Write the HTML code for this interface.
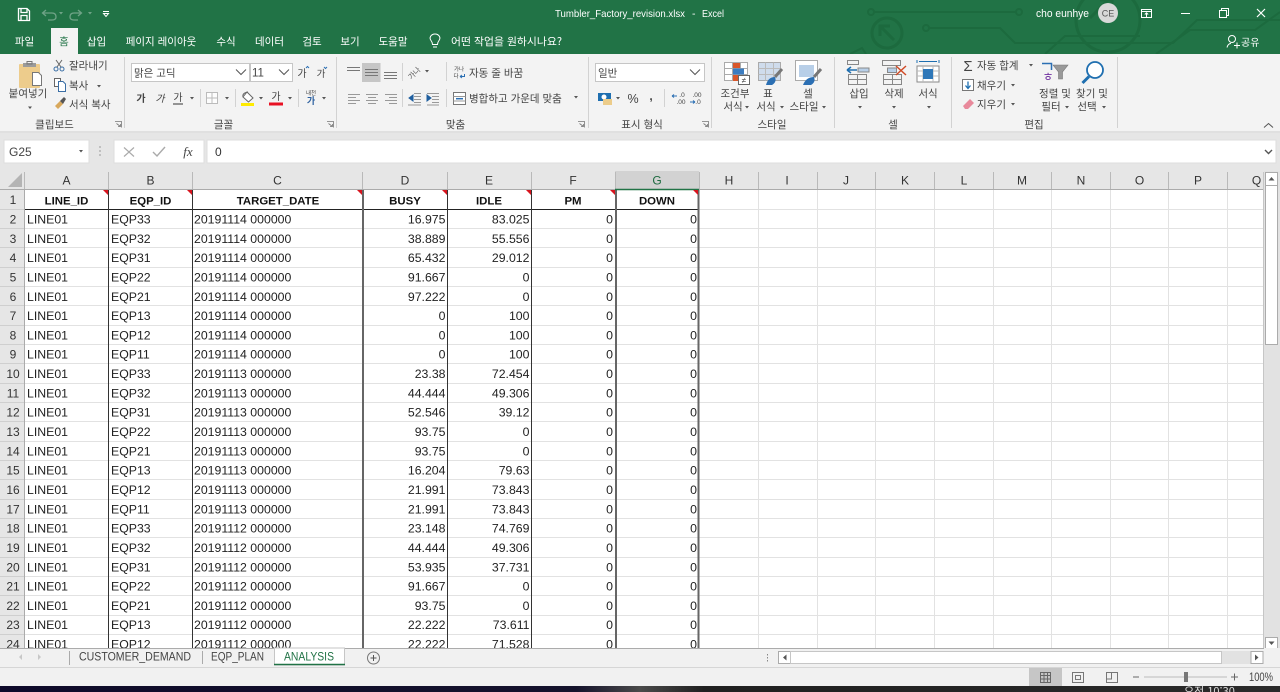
<!DOCTYPE html>
<html lang="ko"><head><meta charset="utf-8"><title>Tumbler_Factory_revision.xlsx - Excel</title>
<style>
html,body{margin:0;padding:0;width:1280px;height:692px;overflow:hidden;background:#e6e6e6}
svg{display:block;position:absolute;left:0;top:0}
text{font-family:"Liberation Sans","Noto Sans CJK KR",sans-serif;font-size:11px;fill:#333}
.k{font-family:"Noto Sans CJK KR","Liberation Sans",sans-serif;font-size:10.5px;fill:#444}
.w{font-family:"Noto Sans CJK KR","Liberation Sans",sans-serif;font-size:10.5px;fill:#fff}
.g text{font-size:12.3px;fill:#222}
.r{text-anchor:end}
.m{text-anchor:middle}
.h text{font-size:11.4px;font-weight:bold;fill:#111;text-anchor:middle}
.c text{font-size:12px;fill:#333;text-anchor:middle}
.n text{font-size:12px;fill:#333;text-anchor:middle}
</style></head><body>
<svg width="1280" height="692" viewBox="0 0 1280 692" xmlns="http://www.w3.org/2000/svg">
<!-- title bar -->
<rect width="1280" height="54" fill="#217346"/>
<g fill="none" stroke="#1c6a3e" stroke-width="2">
<circle cx="871" cy="12" r="3"/><path d="M874 12H1015"/><circle cx="1019" cy="12" r="3"/>
<circle cx="887" cy="33" r="15" stroke-width="3"/><path d="M894 40L881 27M880 36V26H890" stroke-width="3"/>
<circle cx="926" cy="28" r="3"/><path d="M929 28L1000 28L1015 43H1173L1197 20H1280"/>
<circle cx="1108" cy="20" r="32" stroke-width="3"/><path d="M1090 18L1108 0M1100 0H1112V8" stroke-width="3"/>
<path d="M850 54L862 48L866 54M1156 54L1190 30H1255L1280 12M1045 54L1065 36H1140"/>
</g>
<!-- QAT -->
<g fill="none" stroke="#fff" stroke-width="1.3">
<path d="M18.500 8.500H27L29.500 11V20.500H18.500Z"/><path d="M21 8.500V12.500H27V8.500M21 20.500V15.500H27V20.500"/>
<g stroke="#6fa387"><path d="M43 13H52Q56 13 56 17Q56 20 52 20H48M46 10L42.500 13L46 16"/><path d="M82 13H75Q71 13 71 17Q71 20 75 20H79M79 10L82.500 13L79 16" transform="translate(-1 0)"/></g>
</g>
<path d="M59 12h4l-2 2.500zM88 12h4l-2 2.500z" fill="#6fa387"/>
<path d="M103 11.500h6M103.500 13.500h5l-2.500 3z" stroke="#fff" fill="none"/>
<text x="555" y="17" textLength="130" lengthAdjust="spacingAndGlyphs" style="fill:#fff;font-size:10.500px">Tumbler_Factory_revision.xlsx</text>
<text x="692" y="17" style="fill:#fff;font-size:10.500px">-</text>
<text x="702" y="17" textLength="22" lengthAdjust="spacingAndGlyphs" style="fill:#fff;font-size:10.500px">Excel</text>
<text x="1036" y="17" textLength="53" lengthAdjust="spacingAndGlyphs" style="fill:#fff;font-size:11px">cho eunhye</text>
<circle cx="1108" cy="13" r="10" fill="#d9d9d9"/><text x="1108" y="16.500" class="m" style="font-size:9px;fill:#555">CE</text>
<g fill="none" stroke="#fff" stroke-width="1"><rect x="1141.500" y="9.500" width="10" height="8"/><path d="M1141.500 11.500H1151.500M1146.500 17V13M1144.800 14.500L1146.500 12.800L1148.200 14.500"/>
<path d="M1181 13.500H1190"/><rect x="1219.500" y="10.500" width="7" height="7"/><path d="M1221.500 10.500V8.500H1228.500V15.500H1226.500"/><path d="M1257 9L1265 17M1265 9L1257 17" stroke-width="1.200"/></g>
<!-- tabs -->
<rect x="51" y="28" width="27" height="27" fill="#f3f3f3"/>
<text x="24.500" y="45" class="w m">파일</text>
<text x="64" y="45" class="k m" style="fill:#217346">홈</text>
<text x="96.500" y="45" class="w m">삽입</text>
<text x="161" y="45" class="w m">페이지 레이아웃</text>
<text x="226" y="45" class="w m">수식</text>
<text x="269.500" y="45" class="w m">데이터</text>
<text x="312" y="45" class="w m">검토</text>
<text x="350" y="45" class="w m">보기</text>
<text x="393" y="45" class="w m">도움말</text>
<g fill="none" stroke="#fff" stroke-width="1"><path d="M432.500 44.500Q432.500 42.500 431 40.500Q429.500 38.500 430.500 36.500Q432 34 435 34Q438 34 439.500 36.500Q440.500 38.500 439 40.500Q437.500 42.500 437.500 44.500ZM433 47H437"/></g>
<text x="451" y="45" class="w" textLength="111" lengthAdjust="spacingAndGlyphs">어떤 작업을 원하시나요?</text>
<g fill="none" stroke="#fff" stroke-width="1"><circle cx="1232" cy="39" r="3.500"/><path d="M1227 47.500Q1228 43.500 1231 43.500M1234 45.500H1240M1237 42.500V48.500"/></g>
<text x="1241" y="46" class="w" style="font-size:10px">공유</text>
<!-- ribbon -->
<rect y="54" width="1280" height="77" fill="#f3f3f3"/>
<rect y="131" width="1280" height="40" fill="#e6e6e6"/>
<path d="M124.500 57V128M336.500 57V128M588.500 57V128M711.500 57V128M834.500 57V128M951.500 57V128M1117.500 57V128" stroke="#d2d2d2"/>
<!-- clipboard -->
<rect x="19" y="64" width="21" height="24" rx="1" fill="#edcc8c"/><path d="M23 63H36V67H23Z" fill="#9b9b9b"/><path d="M27 61.500H32V64H27Z" fill="none" stroke="#777"/>
<path d="M32.500 72.500H38.500L41.500 75.500V85.500H32.500Z" fill="#fff" stroke="#777"/>
<text x="28" y="97" class="k m">붙여넣기</text><path d="M28 106.500h4l-2 2.500z" fill="#555"/>
<g fill="none" stroke="#3a6ea5" stroke-width="1"><circle cx="56" cy="69" r="2"/><circle cx="62" cy="69" r="2"/></g><path d="M57 67L62 60M61 67L56 60" stroke="#666" fill="none"/>
<text x="69" y="69" class="k">잘라내기</text>
<path d="M54.500 78.500H60.500V86.500H54.500Z" fill="#fff" stroke="#666"/><path d="M58.500 81.500H63L65.500 84V91.500H58.500Z" fill="#fff" stroke="#3a6ea5"/>
<text x="69" y="89" class="k">복사</text><path d="M97 85h4l-2 2.500z" fill="#555"/>
<path d="M55 106L60 101L63 104L58 109Z" fill="#d8a85c"/><path d="M60 101L64 97L66 99L63 104Z" fill="#555"/>
<text x="69" y="108" class="k">서식 복사</text>
<text x="54.500" y="128" class="k m">클립보드</text>
<path d="M115 121.500H121.500V127.500M116.500 123.500L120.500 126.500M118 126.500H120.500V124" fill="none" stroke="#777" stroke-width=".8"/>
<!-- font -->
<rect x="131.500" y="63.500" width="118" height="18" fill="#fff" stroke="#c6c6c6"/><rect x="250.500" y="63.500" width="42" height="18" fill="#fff" stroke="#c6c6c6"/>
<text x="134" y="76.500" class="k">맑은 고딕</text><text x="252" y="76.500" style="font-size:11.500px;fill:#444">11</text>
<path d="M236 69.500L241 74.500L246 69.500M279 69.500L284 74.500L289 69.500" fill="none" stroke="#555"/>
<text x="302" y="77" class="k m" style="font-size:10px">가</text><path d="M306 68l1.500-1.500 1.500 1.500" stroke="#2b6fb3" fill="none"/>
<text x="321" y="77" class="k m" style="font-size:9.500px">가</text><path d="M324 67l1.500 1.500 1.500-1.500" stroke="#2b6fb3" fill="none"/>
<text x="141" y="102" class="k m" style="font-weight:bold;font-size:10px">가</text>
<text x="160" y="102" class="k m" style="font-style:italic;font-size:10px">가</text>
<text x="178" y="101" class="k m" style="font-size:10px">가</text><path d="M173 104H183" stroke="#333"/>
<path d="M190 97h4l-2 2.500zM225 97h4l-2 2.500zM259 97h4l-2 2.500zM288 97h4l-2 2.500zM322 97h4l-2 2.500z" fill="#555"/>
<path d="M200.500 89V107M235.500 89V107M298.500 89V107" stroke="#d2d2d2"/>
<path d="M206.500 92.500H217.500V103.500H206.500ZM212 92.500V103.500M206.500 98H217.500" fill="#fdfdfd" stroke="#bbb"/>
<path d="M243 97L247 92L253 98L248.500 102Z" fill="#fff" stroke="#666"/><path d="M243 97Q242 93 248 92" fill="none" stroke="#666"/><path d="M241 103H254V106H241Z" fill="#ffeb00"/>
<text x="276" y="100" class="k m" style="font-size:10px">가</text><path d="M269 102.500H283V105.500H269Z" fill="#e81123"/>
<text x="311" y="95" class="k m" style="font-size:5.500px">내천</text><text x="311" y="104" class="k m" style="font-size:9px;fill:#2b5f9e;font-weight:bold">가</text>
<text x="223.500" y="128" class="k m">글꼴</text>
<path d="M327 121.500H333.500V127.500M328.500 123.500L332.500 126.500M330 126.500H332.500V124" fill="none" stroke="#777" stroke-width=".8"/>
<!-- alignment -->
<rect x="362" y="63" width="18.500" height="19" fill="#c6c6c6"/>
<path d="M347 67.500H360M347 70.500H360" stroke="#777"/>
<path d="M365 69.500H378M365 72.500H378M365 75.500H378" stroke="#777"/>
<path d="M384 72.500H397M384 75.500H397M384 78.500H397" stroke="#777"/>
<path d="M402.500 63V81M402.500 89V107M446.500 62V81M446.500 89V107" stroke="#d2d2d2"/>
<text x="414" y="76" class="k m" style="font-size:7.500px;fill:#555" transform="rotate(-45 414 73)">가나</text><path d="M425 70h4l-2 2.500zM574 96h4l-2 2.500z" fill="#555"/>
<path d="M348 94.500H360M348 97.500H356M348 100.500H360M348 103.500H356" stroke="#999"/>
<path d="M366 94.500H378M368 97.500H376M366 100.500H378M368 103.500H376" stroke="#999"/>
<path d="M385 94.500H397M389 97.500H397M385 100.500H397M389 103.500H397" stroke="#999"/>
<path d="M414 93.500H421M414 96.500H421M414 99.500H421M414 102.500H421M408 105H421" stroke="#999"/><path d="M413 95L409 98L413 101Z" fill="#1f5f9f" stroke="#1f5f9f"/>
<path d="M427 93.500H439M432 96.500H439M432 99.500H439M432 102.500H439M427 105H439" stroke="#999"/><path d="M427 95L431 98L427 101Z" fill="#1f5f9f" stroke="#1f5f9f"/>
<text x="459" y="71" class="k m" style="font-size:5.500px">가나</text><text x="456" y="78" class="k m" style="font-size:5.500px">다</text><path d="M460 76.500H464.500V74M460 76.500L462 75M460 76.500L462 78" fill="none" stroke="#2b6fb3"/>
<text x="469" y="76.500" class="k">자동 줄 바꿈</text>
<rect x="453.500" y="92.500" width="12" height="12" fill="#fff" stroke="#777"/><path d="M453.500 96.500H465.500M453.500 101H465.500" stroke="#999"/><path d="M456 98.700H463" stroke="#2b6fb3" stroke-width="1.500"/>
<text x="469" y="102" class="k">병합하고 가운데 맞춤</text>
<text x="455.500" y="128" class="k m">맞춤</text>
<path d="M578 121.500H584.500V127.500M579.500 123.500L583.500 126.500M581 126.500H583.500V124" fill="none" stroke="#777" stroke-width=".8"/>
<!-- number -->
<rect x="595.500" y="63.500" width="109" height="18" fill="#fff" stroke="#c6c6c6"/><text x="598" y="76.500" class="k">일반</text>
<path d="M690 69.500L695 74.500L700 69.500" fill="none" stroke="#555"/>
<rect x="598" y="93" width="13" height="8" fill="#1f6fb0"/><circle cx="604" cy="97" r="2.500" fill="#fff"/><rect x="603" y="99" width="9" height="6" fill="#eccc8a"/>
<path d="M616 97h4l-2 2.500z" fill="#555"/>
<text x="633" y="103" class="m" style="font-size:12.500px;fill:#444">%</text><text x="651" y="100" class="m" style="font-size:12px;font-weight:bold;fill:#444">,</text>
<path d="M664.500 89V107" stroke="#d2d2d2"/>
<text x="682" y="97" class="m" style="font-size:6.500px;fill:#444">.0</text><text x="681" y="104" class="m" style="font-size:6.500px;fill:#444">.00</text><path d="M672 96H677M672 96L674 94.500M672 96L674 97.500" stroke="#2b6fb3" fill="none"/>
<text x="697" y="97" class="m" style="font-size:6.500px;fill:#444">.00</text><text x="698" y="104" class="m" style="font-size:6.500px;fill:#444">.0</text><path d="M690 102H695M695 102L693 100.500M695 102L693 103.500" stroke="#2b6fb3" fill="none"/>
<text x="642" y="128" class="k m">표시 형식</text>
<path d="M702 121.500H708.500V127.500M703.500 123.500L707.500 126.500M705 126.500H707.500V124" fill="none" stroke="#777" stroke-width=".8"/>
<!-- styles -->
<g><path d="M724.500 62.500H747.500V80.500H724.500ZM724.500 68.500H747.500M724.500 74.500H747.500M732.500 62.500V80.500M740.500 62.500V80.500" fill="#fff" stroke="#aaa"/>
<rect x="733" y="63" width="7" height="5" fill="#d9572a"/><rect x="733" y="68.500" width="11" height="6" fill="#3b7cc0"/><rect x="733" y="75" width="7" height="6" fill="#d9572a"/>
<rect x="738.500" y="75.500" width="11" height="9" fill="#fff" stroke="#666"/><text x="744" y="83" class="m" style="font-size:8px;fill:#444">≠</text></g>
<g><rect x="758.500" y="62.500" width="22" height="18" fill="#cfdcec" stroke="#aaa"/><path d="M758.500 68.500H780.500M758.500 74.500H780.500M765.500 62.500V80.500M773.500 62.500V80.500" stroke="#bbb"/>
<path d="M782 69L775 77" stroke="#777" stroke-width="3"/><path d="M766 85Q768 77 775 77Q777 82 772 85Z" fill="#2b6fb3"/></g>
<g><rect x="795.500" y="60.500" width="22" height="20" fill="#fff" stroke="#aaa"/><rect x="799" y="65" width="15" height="12" fill="#b8cfe8"/>
<path d="M821 69L814 77" stroke="#777" stroke-width="3"/><path d="M803 85Q806 77 814 77Q816 82 811 85Z" fill="#2b6fb3"/></g>
<text x="735" y="97" class="k m">조건부</text><text x="733" y="110" class="k m">서식</text><path d="M745 106h4l-2 2.500z" fill="#555"/>
<text x="768" y="97" class="k m">표</text><text x="766" y="110" class="k m">서식</text><path d="M780 106h4l-2 2.500z" fill="#555"/>
<text x="808" y="97" class="k m">셀</text><text x="804" y="110" class="k m">스타일</text><path d="M822 106h4l-2 2.500z" fill="#555"/>
<text x="772" y="128" class="k m">스타일</text>
<!-- cells -->
<g fill="#fff" stroke="#888"><path d="M847.500 60.500H858.500V64.500H847.500ZM848.500 74.500H866.500V84.500H848.500ZM848.500 79.500H866.500M857.500 74.500V84.500" fill="none"/><rect x="858" y="68" width="11" height="4" fill="#b8cfe8"/></g>
<path d="M847 70H857M847 70L851 67M847 70L851 73" stroke="#1f6fb0" stroke-width="1.500" fill="none"/>
<g fill="#fff" stroke="#888"><path d="M882.500 60.500H900.500V65.500H882.500ZM883.500 74.500H901.500V84.500H883.500ZM883.500 79.500H901.500M892.500 74.500V84.500" fill="none"/><rect x="887.500" y="68" width="9" height="4.500" fill="#b8cfe8"/></g>
<path d="M896 66L906 75M906 66L896 75" stroke="#d04a26" stroke-width="1.500"/>
<path d="M917 60V63M939 60V63M919 61.500H937" stroke="#1f6fb0" fill="none"/>
<rect x="917" y="66" width="22" height="16" fill="#fff" stroke="#888"/><path d="M917 71H939M917 76H939M923 66V82M933 66V82" stroke="#bbb"/><rect x="923" y="69" width="10" height="10" fill="#2f77b8"/>
<text x="859" y="97" class="k m">삽입</text><text x="894" y="97" class="k m">삭제</text><text x="928" y="97" class="k m">서식</text>
<path d="M858 106h4l-2 2.500zM892 106h4l-2 2.500zM927 106h4l-2 2.500z" fill="#555"/>
<text x="893" y="128" class="k m">셀</text>
<!-- editing -->
<text x="968" y="71" class="m" style="font-size:15px;fill:#444">Σ</text>
<text x="977" y="69" class="k">자동 합계</text><path d="M1029 64h4l-2 2.500z" fill="#555"/>
<rect x="962.500" y="79.500" width="11" height="11" fill="#fff" stroke="#777"/><path d="M968 81.500V88M965.500 85.500L968 88.500L970.500 85.500" fill="none" stroke="#1f6fb0" stroke-width="1.300"/>
<text x="977" y="89" class="k">채우기</text><path d="M1011 84h4l-2 2.500z" fill="#555"/>
<path d="M963 106L970 99L974 103L968 109H965Z" fill="#e8899b"/>
<text x="977" y="108" class="k">지우기</text><path d="M1011 103h4l-2 2.500z" fill="#555"/>
<path d="M1042 63.500H1051.500V70" fill="none" stroke="#2b6fb3" stroke-width="1.500"/><text x="1048" y="81" class="m" style="font-size:12px;fill:#7030a0;font-family:'Noto Sans CJK KR',sans-serif">ㅎ</text>
<path d="M1053 65H1068L1062.500 72V79H1058.500V72Z" fill="#999" stroke="#777" stroke-width=".6"/>
<circle cx="1095" cy="70" r="8" fill="#fff" stroke="#1f6fb0" stroke-width="1.800"/><path d="M1089 76.500L1082.500 83" stroke="#1f6fb0" stroke-width="3"/>
<text x="1055" y="97" class="k m">정렬 및</text><text x="1051" y="110" class="k m">필터</text><path d="M1065 106h4l-2 2.500z" fill="#555"/>
<text x="1092" y="97" class="k m">찾기 및</text><text x="1087" y="110" class="k m">선택</text><path d="M1102 106h4l-2 2.500z" fill="#555"/>
<text x="1034" y="128" class="k m">편집</text>
<path d="M1264 127.500L1268.500 123.500L1273 127.500" fill="none" stroke="#555"/>
<!-- formula bar -->
<rect y="131" width="1280" height="2" fill="#e0e0e0"/>
<rect x="4" y="140" width="85" height="23" fill="#fff" stroke="#ddd"/>
<text x="9" y="156" style="font-size:12px;fill:#444">G25</text><path d="M79 150h4l-2 2.500z" fill="#555"/>
<path d="M100 146v2M100 150v2M100 154v2" stroke="#999"/>
<rect x="114" y="140" width="90" height="23" fill="#fff" stroke="#ddd"/>
<path d="M124 147.500L134 156.500M134 147.500L124 156.500" stroke="#aaa" stroke-width="1.200"/><path d="M153 152L157 156L165 147" fill="none" stroke="#aaa" stroke-width="1.400"/>
<text x="188" y="156" class="m" style="font-family:'Liberation Serif',serif;font-style:italic;font-size:13px;fill:#444">fx</text>
<rect x="207" y="140" width="1069" height="23" fill="#fff" stroke="#ddd"/>
<text x="215" y="156" style="font-size:12px;fill:#333">0</text>
<path d="M1265 150L1268.500 153.500L1272 150" fill="none" stroke="#555" stroke-width="1.400"/>
<!-- grid base -->
<rect x="25" y="190" width="1238" height="458" fill="#fff"/>
<rect x="0" y="171" width="1264" height="19" fill="#e6e6e6"/>
<rect x="0" y="190" width="25" height="458" fill="#e6e6e6"/>
<path d="M8 187H22V173Z" fill="#b4b4b4"/>
<rect x="615" y="171" width="84" height="19" fill="#d2d2d2"/>
<path d="M24.500 172V190M108.500 172V190M192.500 172V190M362.500 172V190M447.500 172V190M531.500 172V190M615.500 172V190M699.500 172V190M758.500 172V190M817.500 172V190M875.500 172V190M934.500 172V190M993.500 172V190M1051.500 172V190M1110.500 172V190M1168.500 172V190M1227.500 172V190" stroke="#b9b9b9"/>
<path d="M0 189.500H1263" stroke="#ababab"/>
<path d="M24.500 190V648" stroke="#ababab"/>
<path d="M25 228.500H1263M25 247.500H1263M25 267.500H1263M25 286.500H1263M25 305.500H1263M25 325.500H1263M25 344.500H1263M25 363.500H1263M25 383.500H1263M25 402.500H1263M25 421.500H1263M25 441.500H1263M25 460.500H1263M25 479.500H1263M25 499.500H1263M25 518.500H1263M25 537.500H1263M25 557.500H1263M25 576.500H1263M25 595.500H1263M25 615.500H1263M25 634.500H1263M699 209.500H1263" stroke="#e2e2e2"/>
<path d="M0 209.500H24M0 228.500H24M0 247.500H24M0 267.500H24M0 286.500H24M0 305.500H24M0 325.500H24M0 344.500H24M0 363.500H24M0 383.500H24M0 402.500H24M0 421.500H24M0 441.500H24M0 460.500H24M0 479.500H24M0 499.500H24M0 518.500H24M0 537.500H24M0 557.500H24M0 576.500H24M0 595.500H24M0 615.500H24M0 634.500H24" stroke="#cfcfcf"/>
<path d="M758.500 190V648M817.500 190V648M875.500 190V648M934.500 190V648M993.500 190V648M1051.500 190V648M1110.500 190V648M1168.500 190V648M1227.500 190V648" stroke="#e2e2e2"/>
<path d="M25 209.500H699" stroke="#222"/>
<path d="M108.500 190V648M192.500 190V648M447.500 190V648M531.500 190V648" stroke="#333"/>
<path d="M363 190V648M616 190V648M698.500 190V648" stroke="#666" stroke-width="2"/>
<path d="M1263.500 172V648" stroke="#c6c6c6"/>
<path d="M615 189.500H699" stroke="#217346" stroke-width="1.500"/>
<path d="M103 190H108V195ZM187 190H192V195ZM357 190H362V195ZM442 190H447V195ZM526 190H531V195ZM610 190H615V195ZM693 190H698V195Z" fill="#d8141e"/>
<!-- column headers -->
<g class="c">
<text x="66.500" y="184.500">A</text><text x="150.500" y="184.500">B</text><text x="277.500" y="184.500">C</text><text x="405" y="184.500">D</text><text x="489" y="184.500">E</text><text x="573" y="184.500">F</text><text x="657" y="184.500" style="fill:#1e6b40">G</text><text x="729" y="184.500">H</text><text x="787" y="184.500">I</text><text x="846" y="184.500">J</text><text x="905" y="184.500">K</text><text x="964" y="184.500">L</text><text x="1022" y="184.500">M</text><text x="1081" y="184.500">N</text><text x="1139.500" y="184.500">O</text><text x="1198" y="184.500">P</text><text x="1256.500" y="184.500">Q</text>
</g>
<g class="h"><text x="66.500" y="204.500">LINE_ID</text><text x="150.500" y="204.500">EQP_ID</text><text x="278" y="204.500">TARGET_DATE</text><text x="405" y="204.500">BUSY</text><text x="489" y="204.500">IDLE</text><text x="573" y="204.500">PM</text><text x="657" y="204.500">DOWN</text></g>
<!-- row numbers -->
<g class="n">
<text x="13" y="204">1</text><text x="13" y="223.500">2</text><text x="13" y="242.800">3</text><text x="13" y="262.100">4</text><text x="13" y="281.500">5</text><text x="13" y="300.800">6</text><text x="13" y="320.100">7</text><text x="13" y="339.400">8</text><text x="13" y="358.700">9</text><text x="13" y="378.100">10</text><text x="13" y="397.400">11</text><text x="13" y="416.700">12</text><text x="13" y="436">13</text><text x="13" y="455.300">14</text><text x="13" y="474.700">15</text><text x="13" y="494">16</text><text x="13" y="513.300">17</text><text x="13" y="532.600">18</text><text x="13" y="551.900">19</text><text x="13" y="571.300">20</text><text x="13" y="590.600">21</text><text x="13" y="609.900">22</text><text x="13" y="629.200">23</text><text x="13" y="648.500">24</text>
</g>
<!-- rows -->
<g class="g">
<g transform="translate(0 223.500)"><text x="27">LINE01</text><text x="111">EQP33</text><text x="194">20191114 000000</text><text x="445.500" class="r">16.975</text><text x="529.500" class="r">83.025</text><text x="613" class="r">0</text><text x="697" class="r">0</text></g>
<g transform="translate(0 242.800)"><text x="27">LINE01</text><text x="111">EQP32</text><text x="194">20191114 000000</text><text x="445.500" class="r">38.889</text><text x="529.500" class="r">55.556</text><text x="613" class="r">0</text><text x="697" class="r">0</text></g>
<g transform="translate(0 262.100)"><text x="27">LINE01</text><text x="111">EQP31</text><text x="194">20191114 000000</text><text x="445.500" class="r">65.432</text><text x="529.500" class="r">29.012</text><text x="613" class="r">0</text><text x="697" class="r">0</text></g>
<g transform="translate(0 281.500)"><text x="27">LINE01</text><text x="111">EQP22</text><text x="194">20191114 000000</text><text x="445.500" class="r">91.667</text><text x="529.500" class="r">0</text><text x="613" class="r">0</text><text x="697" class="r">0</text></g>
<g transform="translate(0 300.800)"><text x="27">LINE01</text><text x="111">EQP21</text><text x="194">20191114 000000</text><text x="445.500" class="r">97.222</text><text x="529.500" class="r">0</text><text x="613" class="r">0</text><text x="697" class="r">0</text></g>
<g transform="translate(0 320.100)"><text x="27">LINE01</text><text x="111">EQP13</text><text x="194">20191114 000000</text><text x="445.500" class="r">0</text><text x="529.500" class="r">100</text><text x="613" class="r">0</text><text x="697" class="r">0</text></g>
<g transform="translate(0 339.400)"><text x="27">LINE01</text><text x="111">EQP12</text><text x="194">20191114 000000</text><text x="445.500" class="r">0</text><text x="529.500" class="r">100</text><text x="613" class="r">0</text><text x="697" class="r">0</text></g>
<g transform="translate(0 358.700)"><text x="27">LINE01</text><text x="111">EQP11</text><text x="194">20191114 000000</text><text x="445.500" class="r">0</text><text x="529.500" class="r">100</text><text x="613" class="r">0</text><text x="697" class="r">0</text></g>
<g transform="translate(0 378.100)"><text x="27">LINE01</text><text x="111">EQP33</text><text x="194">20191113 000000</text><text x="445.500" class="r">23.38</text><text x="529.500" class="r">72.454</text><text x="613" class="r">0</text><text x="697" class="r">0</text></g>
<g transform="translate(0 397.400)"><text x="27">LINE01</text><text x="111">EQP32</text><text x="194">20191113 000000</text><text x="445.500" class="r">44.444</text><text x="529.500" class="r">49.306</text><text x="613" class="r">0</text><text x="697" class="r">0</text></g>
<g transform="translate(0 416.700)"><text x="27">LINE01</text><text x="111">EQP31</text><text x="194">20191113 000000</text><text x="445.500" class="r">52.546</text><text x="529.500" class="r">39.12</text><text x="613" class="r">0</text><text x="697" class="r">0</text></g>
<g transform="translate(0 436)"><text x="27">LINE01</text><text x="111">EQP22</text><text x="194">20191113 000000</text><text x="445.500" class="r">93.75</text><text x="529.500" class="r">0</text><text x="613" class="r">0</text><text x="697" class="r">0</text></g>
<g transform="translate(0 455.300)"><text x="27">LINE01</text><text x="111">EQP21</text><text x="194">20191113 000000</text><text x="445.500" class="r">93.75</text><text x="529.500" class="r">0</text><text x="613" class="r">0</text><text x="697" class="r">0</text></g>
<g transform="translate(0 474.700)"><text x="27">LINE01</text><text x="111">EQP13</text><text x="194">20191113 000000</text><text x="445.500" class="r">16.204</text><text x="529.500" class="r">79.63</text><text x="613" class="r">0</text><text x="697" class="r">0</text></g>
<g transform="translate(0 494)"><text x="27">LINE01</text><text x="111">EQP12</text><text x="194">20191113 000000</text><text x="445.500" class="r">21.991</text><text x="529.500" class="r">73.843</text><text x="613" class="r">0</text><text x="697" class="r">0</text></g>
<g transform="translate(0 513.300)"><text x="27">LINE01</text><text x="111">EQP11</text><text x="194">20191113 000000</text><text x="445.500" class="r">21.991</text><text x="529.500" class="r">73.843</text><text x="613" class="r">0</text><text x="697" class="r">0</text></g>
<g transform="translate(0 532.600)"><text x="27">LINE01</text><text x="111">EQP33</text><text x="194">20191112 000000</text><text x="445.500" class="r">23.148</text><text x="529.500" class="r">74.769</text><text x="613" class="r">0</text><text x="697" class="r">0</text></g>
<g transform="translate(0 551.900)"><text x="27">LINE01</text><text x="111">EQP32</text><text x="194">20191112 000000</text><text x="445.500" class="r">44.444</text><text x="529.500" class="r">49.306</text><text x="613" class="r">0</text><text x="697" class="r">0</text></g>
<g transform="translate(0 571.300)"><text x="27">LINE01</text><text x="111">EQP31</text><text x="194">20191112 000000</text><text x="445.500" class="r">53.935</text><text x="529.500" class="r">37.731</text><text x="613" class="r">0</text><text x="697" class="r">0</text></g>
<g transform="translate(0 590.600)"><text x="27">LINE01</text><text x="111">EQP22</text><text x="194">20191112 000000</text><text x="445.500" class="r">91.667</text><text x="529.500" class="r">0</text><text x="613" class="r">0</text><text x="697" class="r">0</text></g>
<g transform="translate(0 609.900)"><text x="27">LINE01</text><text x="111">EQP21</text><text x="194">20191112 000000</text><text x="445.500" class="r">93.75</text><text x="529.500" class="r">0</text><text x="613" class="r">0</text><text x="697" class="r">0</text></g>
<g transform="translate(0 629.200)"><text x="27">LINE01</text><text x="111">EQP13</text><text x="194">20191112 000000</text><text x="445.500" class="r">22.222</text><text x="529.500" class="r">73.611</text><text x="613" class="r">0</text><text x="697" class="r">0</text></g>
<g transform="translate(0 648.500)"><text x="27">LINE01</text><text x="111">EQP12</text><text x="194">20191112 000000</text><text x="445.500" class="r">22.222</text><text x="529.500" class="r">71.528</text><text x="613" class="r">0</text><text x="697" class="r">0</text></g>
</g>
<!-- vertical scrollbar -->
<rect x="1264" y="171" width="16" height="477" fill="#e2e2e2"/>
<rect x="1265.500" y="172.500" width="12" height="13" fill="#fff" stroke="#ababab"/><path d="M1268.500 180.500h6l-3-3.500z" fill="#555"/>
<rect x="1265.500" y="185.500" width="12" height="159" fill="#fff" stroke="#ababab"/>
<rect x="1265.500" y="637.500" width="12" height="11" fill="#fff" stroke="#ababab"/><path d="M1268.500 641.500h6l-3 3.500z" fill="#555"/>
<!-- tab strip -->
<rect y="648" width="1280" height="38" fill="#f1f1f1"/>
<path d="M0 648.500H274M345 648.500H1264" stroke="#ababab"/>
<path d="M0 667.500H1280" stroke="#d6d6d6"/>
<path d="M22 654v6l-3-3zM38 654v6l3-3z" fill="#c8c8c8"/>
<path d="M69.500 651V665M202.500 651V664" stroke="#aaa"/>
<text x="79" y="660.500" textLength="112" lengthAdjust="spacingAndGlyphs" style="font-size:11.500px;fill:#444">CUSTOMER_DEMAND</text>
<text x="211" y="660.500" textLength="53" lengthAdjust="spacingAndGlyphs" style="font-size:11.500px;fill:#444">EQP_PLAN</text>
<rect x="274.500" y="648" width="70" height="17" fill="#fff" stroke="#c6c6c6"/>
<path d="M274 664.500H345" stroke="#217346" stroke-width="1.600"/>
<text x="284" y="660.500" textLength="50" lengthAdjust="spacingAndGlyphs" style="font-size:11.500px;fill:#217346">ANALYSIS</text>
<circle cx="373.500" cy="658" r="6" fill="none" stroke="#777"/><path d="M370.500 658H376.500M373.500 655V661" stroke="#555"/>
<path d="M767.500 654v1.500M767.500 657v1.500M767.500 660v1.500" stroke="#888"/>
<!-- horizontal scrollbar -->
<rect x="778" y="651" width="485" height="13" fill="#e2e2e2"/>
<rect x="778.500" y="651.500" width="12" height="12" fill="#fff" stroke="#ababab"/><path d="M786.500 654.500v6l-3.500-3z" fill="#555"/>
<rect x="790.500" y="651.500" width="431" height="12" fill="#fff" stroke="#c6c6c6"/>
<rect x="1251" y="651.500" width="12" height="12" fill="#fff" stroke="#ababab"/><path d="M1255 654.500v6l3.500-3z" fill="#555"/>
<!-- status -->
<rect x="1029" y="668" width="33" height="18" fill="#c6c6c6"/>
<path d="M1040.500 672.500H1050.500V682.500H1040.500ZM1040.500 675.500H1050.500M1040.500 679H1050.500M1044 672.500V682.500M1047.500 672.500V682.500" fill="none" stroke="#666"/>
<path d="M1072.500 672.500H1083.500V682.500H1072.500Z M1075.500 675.500H1080.500V679.500H1075.500Z" fill="none" stroke="#777"/>
<path d="M1106.500 672.500H1117.500V682.500H1106.500ZM1106.500 679H1111.500V672.500" fill="none" stroke="#777"/>
<path d="M1133 677H1139M1231 677H1238M1234.500 673.500V680.500" stroke="#666"/>
<path d="M1144 677H1227" stroke="#d6d6d6" stroke-width="2"/><rect x="1184" y="672" width="4" height="10" fill="#777"/>
<text x="1249" y="681" textLength="24" lengthAdjust="spacingAndGlyphs" style="font-size:11.500px;fill:#444">100%</text>
<!-- bottom strip -->
<defs><linearGradient id="b" x1="0" x2="1" y1="0" y2="0"><stop offset="0" stop-color="#0e0a2a"/><stop offset=".45" stop-color="#15132c"/><stop offset=".5" stop-color="#4a4a4a"/><stop offset=".55" stop-color="#202020"/><stop offset="1" stop-color="#2a2a2a"/></linearGradient></defs>
<rect y="686" width="1280" height="6" fill="url(#b)"/>
<text x="1184" y="695" style="font-size:11px;fill:#ddd" class="k">오전 10:30</text>
</svg>
</body></html>
